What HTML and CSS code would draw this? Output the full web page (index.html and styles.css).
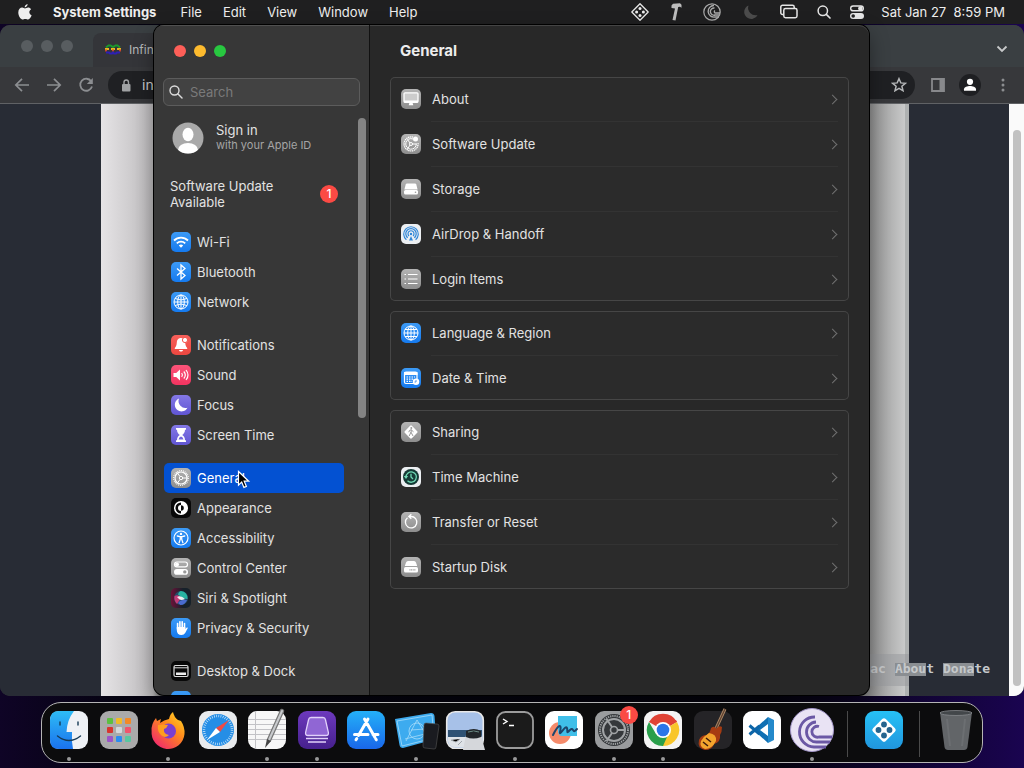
FILE: index.html
```html
<!DOCTYPE html>
<html lang="en">
<head>
<meta charset="utf-8">
<title>System Settings</title>
<link rel="stylesheet" href="styles.css">
</head>
<body>
<!-- menu bar -->
<header class="menubar">
	<nav class="menus">
		<button class="apple" aria-label="Apple"><svg width="14" height="16" viewBox="0 0 14 16"><path fill="#eee" d="M9.6 0C9.7 1.8 8.3 3.4 6.7 3.4 6.500 1.700 8 .2 9.600 0zM7 4.400c.8 0 1.700-.8 3.100-.8 1.200 0 2.300.6 3 1.600-2.600 1.500-2.200 5 .5 6-.6 1.700-2 4.300-3.500 4.300-1 0-1.500-.6-2.800-.6s-1.900.6-2.800.6C2.700 15.500.3 11.800.3 8.500c0-3.200 2-4.900 3.900-4.900 1.200 0 2.100.8 2.800.8z"/></svg></button>
		<button class="appname">System Settings</button>
		<button>File</button>
		<button>Edit</button>
		<button>View</button>
		<button>Window</button>
		<button>Help</button>
	</nav>
	<div class="status">
		<svg width="18" height="18" viewBox="0 0 18 18"><path fill="none" stroke="#e8e8e8" stroke-width="1.300" stroke-linejoin="round" d="M9 .8 17.200 9 9 17.200.8 9z"/><g fill="#eee"><circle cx="9" cy="5.600" r="1.500"/><circle cx="5.600" cy="9" r="1.500"/><circle cx="12.400" cy="9" r="1.500"/><circle cx="9" cy="12.400" r="1.500"/></g></svg>
		<svg width="18" height="18" viewBox="0 0 18 18"><path fill="#bdbdbd" d="M4.500 2.500 6 .8l7-.5 1.500 1.500v3l-1.500-1-1.800.3L8.500 17.500l-3-.5L8 5.500 4.500 5z"/></svg>
		<svg width="18" height="18" viewBox="0 0 18 18"><circle cx="9" cy="9" r="8.200" fill="none" stroke="#aaa" stroke-width="1.200"/><g fill="none" stroke="#aaa" stroke-width="1.400"><path d="M11 2.500a5.800 5.800 0 1 0 1 11.500h4"/><path d="M11.500 5a3.600 3.600 0 1 0 .5 7h4.500"/><path d="M12 7.500a1.500 1.500 0 0 0 0 2.500h5"/></g></svg>
		<svg width="22" height="18" viewBox="0 0 22 18"><path fill="#4c4c4c" d="M9.500 2.500a7 7 0 1 0 9 9.500A7.500 7.500 0 0 1 9.500 2.500z"/></svg>
		<svg width="20" height="18" viewBox="0 0 20 18"><g fill="none" stroke="#e6e6e6" stroke-width="1.500"><path d="M4.500 11.500h-1A1.700 1.700 0 0 1 1.800 9.800V4a1.700 1.700 0 0 1 1.700-1.700h10A1.700 1.700 0 0 1 15.200 4v1.500"/><rect x="4.800" y="5.500" width="13.200" height="9.200" rx="1.700"/></g></svg>
		<svg width="14" height="18" viewBox="0 0 14 18"><circle cx="5.800" cy="7.800" r="4.700" fill="none" stroke="#e6e6e6" stroke-width="1.500"/><path stroke="#e6e6e6" stroke-width="1.700" stroke-linecap="round" d="m9.300 11.300 3.700 3.700"/></svg>
		<svg width="16" height="18" viewBox="0 0 16 18"><rect x="1.700" y="3" width="12.600" height="4.800" rx="2.400" fill="none" stroke="#e6e6e6" stroke-width="1.400"/><circle cx="11.300" cy="5.400" r="2.200" fill="#e6e6e6"/><rect x="1" y="10" width="14" height="6" rx="3" fill="#e6e6e6"/><circle cx="4.200" cy="13" r="1.800" fill="#222"/></svg>
		<span class="clock">Sat Jan 27&nbsp; 8:59 PM</span>
	</div>
</header>

<main class="desktop">
	<!-- browser window, behind -->
	<section class="browser">
		<div class="tabstrip">
			<span class="light"></span><span class="light"></span><span class="light"></span>
			<div class="tab">
				<svg width="16" height="12" viewBox="0 0 16 12"><g fill="none" stroke-width="2"><path stroke="#1c9a2c" d="M1 3.500 3.500 1.500h2L8 3l2.500-1.500h2L15 3.500"/><path stroke="#e8b820" d="M0 5h4M6 5h4M12 5h4"/><path stroke="#c8452c" d="M0 6.500h2M7 6.500h2M14 6.500h2"/><path stroke="#2d1fb4" d="M1 8.500h3l1 1h2l1-1 1 1h2l1-1h3"/></g></svg>
				<span>Infin</span>
			</div>
			<svg class="chev" width="12" height="8" viewBox="0 0 12 8"><path fill="none" stroke="#c8cacb" stroke-width="1.800" d="m1.500 1.500 4.500 4.500 4.500-4.500"/></svg>
		</div>
		<div class="toolbar">
			<button aria-label="Back"><svg width="16" height="16" viewBox="0 0 16 16"><path fill="none" stroke="#8c8e91" stroke-width="1.700" d="M15 8H2M8 1.800 1.800 8 8 14.200"/></svg></button>
			<button aria-label="Forward"><svg width="16" height="16" viewBox="0 0 16 16"><path fill="none" stroke="#8c8e91" stroke-width="1.700" d="M1 8h13M8 1.800 14.200 8 8 14.200"/></svg></button>
			<button aria-label="Reload"><svg width="16" height="16" viewBox="0 0 16 16"><path fill="none" stroke="#8c8e91" stroke-width="1.800" d="M13.200 4.300A6 6 0 1 0 14 9.500"/><path fill="#8c8e91" d="M14.800 1v6H8.800z"/></svg></button>
			<div class="omnibox">
				<svg width="10" height="13" viewBox="0 0 10 13"><rect x="1" y="5" width="8.500" height="7.500" rx="1" fill="#a0a2a4"/><path fill="none" stroke="#a0a2a4" stroke-width="1.400" d="M3 5.500V3.300a2.200 2.200 0 0 1 4.500 0v2.200"/></svg>
				<span>in</span>
				<svg class="star" width="16" height="16" viewBox="0 0 16 16"><path fill="none" stroke="#b4b6b8" stroke-width="1.500" d="m8 1.700 1.800 4.200 4.600.4-3.500 3 1.100 4.500L8 11.400l-4 2.400 1.100-4.500-3.500-3 4.600-.4z"/></svg>
			</div>
			<svg width="14" height="14" viewBox="0 0 14 14"><path fill="none" stroke="#88898c" stroke-width="1.800" d="M1 1h12v12H1z"/><path fill="#88898c" d="M8.500 1H13v12H8.500z"/></svg>
			<svg class="profile" width="22" height="22" viewBox="0 0 22 22"><circle cx="11" cy="11" r="11" fill="#1e1f22"/><circle cx="11" cy="7.800" r="3.100" fill="#fff"/><path fill="#fff" d="M5 16.800v-1.600c0-2 3.500-3.200 6-3.200s6 1.200 6 3.200v1.600z"/></svg>
			<svg width="4" height="14" viewBox="0 0 4 14"><g fill="#8c8e91"><circle cx="2" cy="2" r="1.500"/><circle cx="2" cy="7" r="1.500"/><circle cx="2" cy="12" r="1.500"/></g></svg>
		</div>
		<div class="page">
			<div class="paper"></div>
			<div class="pagefoot">
				<span class="faded">ac</span>
				<a href="#">About</a>
				<a href="#">Donate</a>
			</div>
			<div class="pagescroll"></div>
		</div>
	</section>

	<!-- settings window -->
	<section class="settings">
		<aside class="sidebar">
			<div class="lights"><button class="red" aria-label="Close"></button><button class="yellow" aria-label="Minimize"></button><button class="green" aria-label="Zoom"></button></div>
			<div class="search">
				<svg width="14" height="14" viewBox="0 0 14 14"><circle cx="5.500" cy="5.500" r="4.500" fill="none" stroke="#dcdcdc" stroke-width="1.400"/><path stroke="#dcdcdc" stroke-width="1.500" stroke-linecap="round" d="m9 9 4 4"/></svg>
				<input type="text" placeholder="Search" aria-label="Search">
			</div>
			<div class="scroller">
				<a href="#" class="account">
					<svg width="32" height="32" viewBox="0 0 32 32"><clipPath id="av"><circle cx="16" cy="16" r="15.500"/></clipPath><circle cx="16" cy="16" r="15.500" fill="#a9a9a9"/><g clip-path="url(#av)" fill="#fff"><ellipse cx="16" cy="12.500" rx="5.500" ry="6.800"/><ellipse cx="16" cy="28" rx="10" ry="7"/></g></svg>
					<span><b>Sign in</b><small>with your Apple ID</small></span>
				</a>
				<a href="#" class="update"><span>Software Update Available</span><i class="badge">1</i></a>
				<ul>
					<li><a href="#"><svg class="tile blue" viewBox="0 0 20 20"><g fill="none" stroke="#fff" stroke-width="1.800"><path d="M3 8.500a10 10 0 0 1 14 0M5.800 11.300a6 6 0 0 1 8.400 0"/></g><path fill="#fff" d="M10 15.800 7.800 13.500a3.200 3.200 0 0 1 4.400 0z"/></svg>Wi-Fi</a></li>
					<li><a href="#"><svg class="tile blue" viewBox="0 0 20 20"><path fill="none" stroke="#fff" stroke-width="1.300" d="m6 6.500 8 7-4 3.500V3l4 3.500-8 7"/></svg>Bluetooth</a></li>
					<li><a href="#"><svg class="tile blue" viewBox="0 0 20 20"><g fill="none" stroke="#fff" stroke-width="1"><circle cx="10" cy="10" r="7"/><ellipse cx="10" cy="10" rx="3.300" ry="7"/><path d="M3 10h14M10 3v14M4 6.500q6 3 12 0M4 13.500q6-3 12 0"/></g></svg>Network</a></li>
				</ul>
				<ul>
					<li><a href="#"><svg class="tile red" viewBox="0 0 20 20"><path fill="#fff" d="M10 3c-3 0-4 2.200-4.200 4.500-.2 3-.8 4-2 5.500v1h12.400v-1c-1.200-1.500-1.800-2.500-2-5.500C14 5 13 3 10 3zM8 15h4c-.3 2-3.700 2-4 0z"/><circle cx="14" cy="5" r="2.600" fill="#fff" stroke="#f4554d"/></svg>Notifications</a></li>
					<li><a href="#"><svg class="tile pink" viewBox="0 0 20 20"><path fill="#fff" d="M2.500 8h2.700L9 4.500v11L5.200 12H2.500z"/><g fill="none" stroke="#fff" stroke-width="1.200"><path d="M10.700 8q1.500 2 0 4M12.800 6.500q3 3.500 0 7M15 5q4 5 0 10"/></g></svg>Sound</a></li>
					<li><a href="#"><svg class="tile purple" viewBox="0 0 20 20"><path fill="#fff" d="M8 3.500a6.700 6.700 0 1 0 8.500 9.200A7 7 0 0 1 8 3.500z"/></svg>Focus</a></li>
					<li><a href="#"><svg class="tile purple" viewBox="0 0 20 20"><path fill="#fff" d="M5 3h10v1.800h-1c0 3-1.500 4.200-2.800 5.200 1.300 1 2.800 2.200 2.800 5.200h1V17H5v-1.800h1c0-3 1.500-4.200 2.800-5.200C7.500 9 6 7.800 6 4.800H5z"/><path fill="#7367dd" d="M7.500 14.500Q8 12 10 11.500q2 .5 2.500 3z"/></svg>Screen Time</a></li>
				</ul>
				<ul>
					<li><a href="#" class="on"><svg class="tile gray" viewBox="0 0 20 20"><g fill="none" stroke="#fff"><circle cx="10" cy="10" r="7.300" stroke-width="1.200" stroke-dasharray="1 .9"/><circle cx="10" cy="10" r="6" stroke-width="1.200"/><circle cx="10" cy="10" r="1.700"/><path d="m9 8.500-3-4M9 11.500l-3 4M11.700 10h5"/></g></svg>General</a></li>
					<li><a href="#"><svg class="tile black" viewBox="0 0 20 20"><circle cx="10" cy="10" r="6.300" fill="none" stroke="#fff" stroke-width="1.500"/><path fill="#fff" d="M10 3.700a6.300 6.300 0 0 1 0 12.600v-3.500a2.800 2.800 0 0 0 0-5.600z"/><path fill="#fff" d="M10 7a3 3 0 0 0 0 6z"/></svg>Appearance</a></li>
					<li><a href="#"><svg class="tile blue" viewBox="0 0 20 20"><circle cx="10" cy="10" r="7" fill="none" stroke="#fff" stroke-width="1.200"/><circle cx="10" cy="5.900" r="1.200" fill="#fff"/><path fill="none" stroke="#fff" stroke-width="1.300" stroke-linecap="round" d="m6.300 8 2.700.6h2l2.700-.6M9.300 8.600v2.600l-1.200 3.600M10.700 8.600v2.600l1.200 3.600"/></svg>Accessibility</a></li>
					<li><a href="#"><svg class="tile gray" viewBox="0 0 20 20"><rect x="3.500" y="4" width="13" height="4.800" rx="2.400" fill="none" stroke="#fff" stroke-width="1.200"/><circle cx="6" cy="6.400" r="2" fill="#fff"/><rect x="3" y="11" width="14" height="5.800" rx="2.900" fill="#fff"/><circle cx="13.800" cy="13.900" r="1.700" fill="#999"/></svg>Control Center</a></li>
					<li><a href="#"><svg class="tile siri" viewBox="0 0 20 20"><circle cx="10" cy="10" r="7" fill="#254b66"/><path fill="#27b3a1" d="M10 3a7 7 0 0 1 6.500 8Q12 11 7 6.500 8 3 10 3z"/><path fill="#c43c78" d="M3.500 8Q8 6 10 10l-4 6Q2.500 12.500 3.500 8z"/><path fill="#4a6bd0" d="M7 15q3-4 9-3-2 5-6.500 5z"/><path fill="#fff" opacity=".9" d="M6 9q4-2 8 2-4 2-6 0z"/></svg>Siri &amp; Spotlight</a></li>
					<li><a href="#"><svg class="tile blue" viewBox="0 0 20 20"><g stroke="#fff" stroke-width="1.600" stroke-linecap="round"><path d="M6.600 11V5.500M8.900 10V3.800M11.200 10V3.800M13.500 11V5.500"/></g><path fill="#fff" d="M5.800 9h8.500v2l1.500-1.500q1.200-.3 1 .6l-2.600 5q-1.200 2-3.700 2-4.700 0-4.700-5z"/></svg>Privacy &amp; Security</a></li>
				</ul>
				<ul>
					<li><a href="#"><svg class="tile black" viewBox="0 0 20 20"><rect x="3" y="4.500" width="14" height="11" rx="1.500" fill="none" stroke="#ddd" stroke-width="1.200"/><path stroke="#ddd" d="M3 6.800h14"/><path fill="#eee" d="M5 11.500h10V14H5z"/></svg>Desktop &amp; Dock</a></li>
					<li><a href="#" aria-label="Displays"><svg class="tile blue" viewBox="0 0 20 20"><circle cx="10" cy="10" r="6" fill="#fff"/></svg></a></li>
				</ul>
			</div>
			<div class="thumb"></div>
		</aside>

		<div class="content">
			<h1>General</h1>
			<ul class="card">
				<li><button><svg class="tile gray" viewBox="0 0 20 20"><rect x="3" y="3.800" width="14" height="9.500" rx="1" fill="#ccc" stroke="#fff" stroke-width="1.300"/><path fill="#fff" d="M3 11.500h14v2H3zM8.500 13.500h3l.8 2.800H7.700z"/></svg>About</button></li>
				<li><button><svg class="tile gray" viewBox="0 0 20 20"><g fill="none" stroke="#fff"><path stroke-width="1.300" stroke-dasharray="1.300 .6" d="M12 3.200A7 7 0 1 0 17 9"/><path d="M12 5A5.300 5.300 0 1 0 15.300 9.500M9 9 6.500 5.500M9 11l-2.500 4M11 10h4.500"/><circle cx="10" cy="10" r="1.500"/></g><circle cx="14.500" cy="5" r="2.500" fill="#fff"/></svg>Software Update</button></li>
				<li><button><svg class="tile gray" viewBox="0 0 20 20"><path fill="#fff" d="M6 4.500h8q1 0 1.300 1l1.300 5H3.400l1.300-5q.3-1 1.300-1z"/><rect x="3" y="11" width="14" height="4.500" rx="1.500" fill="#fff"/><circle cx="14.500" cy="13.200" r=".8" fill="#999"/></svg>Storage</button></li>
				<li><button><svg class="tile white" viewBox="0 0 20 20"><g fill="none" stroke="#3187d8" stroke-width="1.200"><path d="M5.400 15.700a7.300 7.300 0 1 1 9.200 0M6.700 13.800a5.200 5.200 0 1 1 6.600 0M8 12a3 3 0 1 1 4 0"/></g><circle cx="10" cy="10" r="1.200" fill="#3187d8"/><path fill="#3187d8" d="m10 12 2 4.500H8z"/></svg>AirDrop &amp; Handoff</button></li>
				<li><button><svg class="tile gray" viewBox="0 0 20 20"><g stroke="#fff" stroke-width="1.200"><path d="M3.500 5.500H5M7 5.500h9.500M3.500 10H5M7 10h9.500M3.500 14.500H5M7 14.500h9.500"/></g></svg>Login Items</button></li>
			</ul>
			<ul class="card">
				<li><button><svg class="tile blue" viewBox="0 0 20 20"><g fill="none" stroke="#fff" stroke-width="1"><circle cx="10" cy="10" r="7"/><ellipse cx="10" cy="10" rx="3.300" ry="7"/><path d="M3 10h14M10 3v14M4 6.500h12M4 13.500h12"/></g></svg>Language &amp; Region</button></li>
				<li><button><svg class="tile blue" viewBox="0 0 20 20"><rect x="3.500" y="4" width="12.500" height="11.500" rx="1.500" fill="none" stroke="#fff" stroke-width="1.200"/><path fill="#fff" d="M3 4h13.500v3H3z"/><path stroke="#fff" stroke-width="1.200" stroke-dasharray="1.500 1" d="M5.500 9h8.500M5.500 11.200H12M5.500 13.400H11"/><circle cx="15" cy="13.800" r="3.300" fill="#fff"/><path fill="none" stroke="#2782ee" stroke-width=".8" d="M15 12v2h-1.500"/></svg>Date &amp; Time</button></li>
			</ul>
			<ul class="card">
				<li><button><svg class="tile gray" viewBox="0 0 20 20"><rect x="5" y="5" width="10" height="10" rx="1.200" fill="#fff" transform="rotate(45 10 10)"/><circle cx="10.300" cy="6" r="1" fill="#999"/><path fill="none" stroke="#999" d="M10.200 7.500v3l1.800 3.500M10 10l-1.800 4M7.800 10.200 8.500 8.400l1.700-.6 2.300 2"/></svg>Sharing</button></li>
				<li><button><svg class="tile white" viewBox="0 0 20 20"><circle cx="10" cy="10" r="8" fill="#153a35"/><path fill="none" stroke="#6fd8b4" stroke-width="1.300" d="M5 10a5.200 5.200 0 1 1 1.500 3.700M10 6.800V10l2 2"/><path fill="#6fd8b4" d="M2.800 9h4.400L5 12z"/></svg>Time Machine</button></li>
				<li><button><svg class="tile gray" viewBox="0 0 20 20"><path fill="none" stroke="#fff" stroke-width="1.300" d="M6.500 5.800A5.700 5.700 0 1 0 10 4.500H8M10.300 2.200 7.800 4.500l2.500 2.300"/></svg>Transfer or Reset</button></li>
				<li><button><svg class="tile gray" viewBox="0 0 20 20"><path fill="#fff" d="M7 4h6q1.500 0 2 1.500L16.200 9H3.800L5 5.500Q5.500 4 7 4z"/><rect x="3" y="10" width="14" height="5.500" rx="1.500" fill="#fff"/><path stroke="#999" stroke-width="1.300" stroke-dasharray="1 .6" d="M8.500 12.800H15"/></svg>Startup Disk</button></li>
			</ul>
		</div>
	</section>
	<svg class="cursor" width="14" height="20" viewBox="0 0 14 20"><path fill="#000" stroke="#fff" stroke-width="1.200" d="M1.500 1.500v13.600l3.200-3 2.200 5.300 2.500-1-2.200-5.200h4.500z"/></svg>
</main>

<!-- dock -->
<footer class="dock">
	<button class="app run" aria-label="Finder"><svg viewBox="0 0 38 38"><defs><linearGradient id="fb" x1="0" y1="0" x2="0" y2="1"><stop offset="0" stop-color="#2ebcf5"/><stop offset="1" stop-color="#1a72ee"/></linearGradient></defs><rect width="38" height="38" rx="9" fill="#eef1f5"/><path fill="url(#fb)" d="M9 0h15q-7 9-7.500 21H22q-.6 9 1 17H9q-9 0-9-9V9q0-9 9-9z"/><g fill="none" stroke="#163a55" stroke-width="1.400" stroke-linecap="round"><path d="M10 11v3M28 11v3M7.500 25q11.500 9 23 0"/></g></svg></button>
	<button class="app" aria-label="Launchpad"><svg viewBox="0 0 38 38"><rect width="38" height="38" rx="9" fill="#aaa"/><rect x="7" y="7" width="6" height="6" rx="1" fill="#5cc040"/><rect x="16" y="7" width="6" height="6" rx="1" fill="#f0bb28"/><rect x="25" y="7" width="6" height="6" rx="1" fill="#f38a27"/><rect x="7" y="16" width="6" height="6" rx="1" fill="#d8352e"/><rect x="16" y="16" width="6" height="6" rx="1" fill="#d4d8da"/><rect x="25" y="16" width="6" height="6" rx="1" fill="#f1546c"/><rect x="7" y="25" width="6" height="6" rx="1" fill="#9c55c8"/><rect x="16" y="25" width="6" height="6" rx="1" fill="#2b8df0"/><rect x="25" y="25" width="6" height="6" rx="1" fill="#58c7a0"/></svg></button>
	<button class="app run" aria-label="Firefox"><svg viewBox="0 0 38 38"><defs><linearGradient id="ff" x1="1" y1="0" x2=".2" y2="1"><stop offset="0" stop-color="#ffe226"/><stop offset=".45" stop-color="#ff8a1c"/><stop offset="1" stop-color="#f0266f"/></linearGradient></defs><path fill="url(#ff)" d="M20 8q1-5 4-7 1 5 5 8l3 1q4 6 3.500 13A16.500 16.500 0 0 1 2.600 20Q2 13 7 7l1 3 4-2-1 4q4-3 9-4z"/><circle cx="19.500" cy="20" r="7.500" fill="#7a3fd0"/><path fill="#ff9d1e" d="M9 14q6-1 10 0-1 3-4 4-1 5 5 6-4 4-8 0-4-4-3-10z"/></svg></button>
	<button class="app" aria-label="Safari"><svg viewBox="0 0 38 38"><rect width="38" height="38" rx="9" fill="#e9ebed"/><circle cx="19" cy="19" r="16" fill="#258ee6"/><circle cx="19" cy="19" r="14" fill="none" stroke="#d6ecfc" stroke-width="2.500" stroke-dasharray=".7 1.500"/><path fill="#ef4a43" d="m30 9-9 12-4-4z"/><path fill="#fff" d="m8 29 9-12 4 4z"/></svg></button>
	<button class="app run" aria-label="TextEdit"><svg viewBox="0 0 38 38"><rect width="38" height="38" rx="9" fill="#f7f7f7"/><path stroke="#c2c2c6" d="M0 8.500h38M0 13.500h38M0 18.500h38M0 23.500h38M0 28.500h38M7.500 0v38"/><path stroke="#777" stroke-width="4.500" stroke-linecap="round" d="M34 0 21 29"/><path stroke="#c9cbce" stroke-width="2" stroke-linecap="round" d="M34 0 21 29"/><path fill="#444" d="m19 28-2 9 6-7z"/></svg></button>
	<button class="app run" aria-label="Drive"><svg viewBox="0 0 38 38"><defs><linearGradient id="pu" x1="0" y1="0" x2="0" y2="1"><stop offset="0" stop-color="#6d39bd"/><stop offset="1" stop-color="#46208d"/></linearGradient></defs><rect width="38" height="38" rx="9" fill="url(#pu)"/><path fill="#9066d4" stroke="#e1d1fa" stroke-width="1.300" d="M13 6.500h12q2 0 2.400 2l3 13q.4 3-2.400 3H10q-2.800 0-2.400-3l3-13q.4-2 2.400-2z"/><path stroke="#e1d1fa" stroke-width="1.300" d="M8 27.500h22M10 31h18"/></svg></button>
	<button class="app" aria-label="App Store"><svg viewBox="0 0 38 38"><defs><linearGradient id="as" x1="0" y1="0" x2="0" y2="1"><stop offset="0" stop-color="#24b0f8"/><stop offset="1" stop-color="#1967ea"/></linearGradient></defs><rect width="38" height="38" rx="9" fill="url(#as)"/><g stroke="#fff" stroke-width="3" stroke-linecap="round"><path d="m21 8-9.500 16.500M17.500 8 28 26.500M7.500 23.500H21M26 23.500h5M9.800 27.500l-.8 1.300M28.800 28l.5.800"/></g></svg></button>
	<button class="app run" aria-label="Simulator"><svg viewBox="0 0 38 38"><path fill="#3dabef" d="M-2 8 34 2q3 0 3.500 3L39 28 6 37q-3 0-3.500-3z"/><g fill="none" stroke="#a6dcfa" stroke-width=".8"><path d="m0 10 35-6 2 23L5 35zM9 30 20 9l11 18M8 28l24-6M14 19l14-1"/><circle cx="20" cy="20" r="8"/></g><path fill="#1a1b20" stroke="#555" stroke-width=".6" d="m29 12 11 1q2 0 2 2l-3 21q0 2-2 2l-9-1q-2 0-2-2l1-21q0-2 2-2z"/></svg></button>
	<button class="app" aria-label="Preview"><svg viewBox="0 0 38 38"><rect x=".7" y=".7" width="36.600" height="36.600" rx="8.500" fill="#a7c1e8" stroke="#e8e8e8" stroke-width="1.600"/><path fill="#2f5274" d="M2 19h34v7H2z"/><path fill="#dfe3e8" d="M2 26h34v4q-1 6-7 6H9q-6 0-7-6z"/><path stroke="#a1a6ac" d="m5 29 5 2 4-3M12 34l4-4"/><path fill="#d5d7db" d="M20 24h15l4 15H17z"/><path fill="#22262a" d="M20 20q8-4 15 0v6q-8 3-15 0z"/><path stroke="#6e8d88" d="M22 21q6-2 11 0"/></svg></button>
	<button class="app run" aria-label="Terminal"><svg viewBox="0 0 38 38"><rect x="1" y="1" width="36" height="36" rx="8.500" fill="#1b1b1b" stroke="#9c9c9c" stroke-width="1.800"/><path fill="none" stroke="#fff" stroke-width="1.400" d="m7 8 4 2.500L7 13M13 14.500h5"/></svg></button>
	<button class="app" aria-label="Freeform"><svg viewBox="0 0 38 38"><rect width="38" height="38" rx="9" fill="#fff"/><circle cx="15" cy="22" r="11" fill="#f58b6b"/><path fill="#40bfe9" d="M13 5h19v20H17q-4 0-4-6z"/><path fill="none" stroke="#1d456b" stroke-width="2" stroke-linecap="round" d="M8 24c6-12 9-11 7-3-1 5 6-8 7-4s-1 6 3 2 2 5 7-1"/></svg></button>
	<button class="app run" aria-label="System Settings"><svg viewBox="0 0 38 38"><rect width="38" height="38" rx="9" fill="#9a9c9e"/><circle cx="19" cy="19" r="16" fill="#35383b"/><g fill="none" stroke="#a1a4a6"><circle cx="19" cy="19" r="14" stroke-width="2" stroke-dasharray="1.200 1"/><circle cx="19" cy="19" r="11" stroke-width="2"/><circle cx="19" cy="19" r="3.500" stroke-width="1.600"/><path stroke-width="2" d="m17 16-5.500-8M17 22l-5.500 8M22.500 19H30"/></g></svg><i class="badge">1</i></button>
	<button class="app run" aria-label="Chrome"><svg viewBox="0 0 38 38"><rect width="38" height="38" rx="9" fill="#f4f4f4"/><path fill="#e04335" d="M19 19 5 11a16 16 0 0 1 28 0z"/><path fill="#f8c62b" d="M19 19l14-8a16 16 0 0 1-14 24z"/><path fill="#2a9f4b" d="M19 35A16 16 0 0 1 5 11l7 12 11 3z"/><path fill="#e04335" d="M5 11h28l-1-2H8z"/><circle cx="19" cy="19" r="8" fill="#fff"/><circle cx="19" cy="19" r="6.300" fill="#2b75e8"/></svg></button>
	<button class="app" aria-label="GarageBand"><svg viewBox="0 0 38 38"><rect width="38" height="38" rx="9" fill="#252427"/><path stroke="#b08a67" stroke-width="3" d="M31-2 19 24"/><path stroke="#5c4030" stroke-width="1.300" d="M31-2 19 24"/><path fill="#a63b12" d="M17 17q4-3 5 1 3-4 6-2 0 5-2 8 1 7-6 9-2 6-9 6-8-2-6-10 2-5 8-5 3-2 4-7z"/><path fill="#f3a42d" d="M15 22q8 1 7 8-4 8-11 8-6-2-4-8 3-5 8-8z"/><path stroke="#3b1a0e" stroke-width="1.500" d="m12 27 5 4M9 31l5 4"/></svg></button>
	<button class="app" aria-label="Visual Studio Code"><svg viewBox="0 0 38 38"><rect width="38" height="38" rx="9" fill="#fff"/><path fill="#2489ca" d="m25 6 6 3v20l-6 3z"/><path fill="#1070b3" d="m25 6-14.500 13L25 32V25l-8-6 8-6z"/><path fill="none" stroke="#0d65a8" stroke-width="3" d="m6.500 14.500 10 8.500M6.500 23.500l10-8.500"/></svg></button>
	<button class="app run" aria-label="BitTorrent"><svg viewBox="0 0 38 38"><circle cx="19" cy="19" r="21.500" fill="#e9e3f4" stroke="#a497ca"/><g fill="none" stroke="#6b58a5" stroke-width="2.800"><path d="M22 6A14.500 14.500 0 1 0 21 36h12"/><path d="M23 11a10 10 0 1 0 1 20h13"/><path d="M26 15.500a5.500 5.500 0 1 0 0 10.500h13"/></g></svg></button>
	<span class="sep"></span>
	<button class="app" aria-label="Tiles"><svg viewBox="0 0 38 38"><defs><linearGradient id="ti" x1="0" y1="0" x2="0" y2="1"><stop offset="0" stop-color="#26c1f5"/><stop offset="1" stop-color="#2196de"/></linearGradient></defs><rect width="38" height="38" rx="9" fill="url(#ti)"/><rect x="10" y="10" width="18" height="18" rx="2.500" fill="#fff" transform="rotate(45 19 19)"/><g fill="#25648e"><circle cx="19" cy="13.500" r="2.900"/><circle cx="13.500" cy="19" r="2.900"/><circle cx="24.500" cy="19" r="2.900"/><circle cx="19" cy="24.500" r="2.900"/></g></svg></button>
	<span class="sep"></span>
	<button class="app" aria-label="Trash"><svg viewBox="0 0 38 38"><path fill="#626568" d="M3 1h32l-4.500 35q-.5 3-3.500 3H11q-3 0-3.500-3z"/><ellipse cx="19" cy="2" rx="16" ry="2.500" fill="#43474a" stroke="#85888b" stroke-width=".8"/><path stroke="#6c6f72" stroke-width="2" d="m10 8 3 27M28 8l-3 27"/></svg></button>
</footer>
</body>
</html>
```
FILE: styles.css
```css
*{
	box-sizing:border-box;
}
body{
	margin:0;
	height:100vh;
	display:flex;
	flex-direction:column;
	overflow:hidden;
	position:relative;
	font-family:Inter, "Liberation Sans", sans-serif;
	font-size:13px;
	line-height:16px;
	color:#e2e2e2;
	background:linear-gradient(90deg, #0f0426 0%, #050310 12%, #04030c 75%, #1a0450 100%);
}
button{
	border:0;
	padding:0;
	margin:0;
	background:none;
	color:inherit;
	font:inherit;
	text-align:left;
}
a{
	color:inherit;
	text-decoration:none;
}
ul{
	list-style:none;
	margin:0;
	padding:0;
}
svg{
	display:block;
	flex:none;
	overflow:visible;
}

/* menu bar */
.menubar{
	height:24px;
	flex:none;
	display:flex;
	justify-content:space-between;
	align-items:center;
	padding:0 19px 0 18px;
	background:#1f1f20;
	color:#eee;
}
.menus, .status{
	display:flex;
	align-items:center;
	gap:21px;
}
.status{
	gap:18px;
}
.appname{
	margin-right:3px;
	font-weight:700;
}
.clock{
	margin-left:-2px;
}

/* desktop and windows */
.desktop{
	flex:1;
	position:relative;
	margin-bottom:72px;
}
.browser{
	position:absolute;
	top:1px;
	left:0;
	right:0;
	bottom:0;
	display:flex;
	flex-direction:column;
	border-radius:10px;
	overflow:hidden;
	background:#36373a;
}
.tabstrip{
	height:42px;
	flex:none;
	display:flex;
	align-items:center;
	gap:8px;
	padding:0 16px 0 21px;
	background:#3a3f42;
}
.light{
	width:12px;
	height:12px;
	border-radius:50%;
	background:#585d60;
}
.tab{
	align-self:flex-end;
	height:34px;
	width:240px;
	margin-left:12px;
	padding-left:12px;
	display:flex;
	align-items:center;
	gap:8px;
	font-size:12px;
	border-radius:8px 8px 0 0;
	background:#343539;
	color:#b6b8ba;
}
.chev{
	margin:6px 0 0 auto;
}
.toolbar{
	height:37px;
	flex:none;
	display:flex;
	align-items:center;
	gap:16px;
	padding:0 19px 0 14px;
	border-bottom:1px solid #606265;
	background:#37383b;
}
.omnibox{
	flex:1;
	height:28px;
	margin-left:-2px;
	padding:0 8px 0 13px;
	border-radius:14px;
	display:flex;
	align-items:center;
	gap:11px;
	font-size:14px;
	background:#1f2023;
	color:#ccc;
}
.star{
	margin-left:auto;
}
.profile{
	margin:0 4px 0 -2px;
}
.page{
	flex:1;
	display:flex;
	position:relative;
	padding-left:101px;
	background:#282c35;
}
.paper{
	flex:1;
	margin-right:100px;
	border-right:4px solid #aeb1b1;
	background:linear-gradient(90deg, #e6e4e6 0, #bcbabc 52px, #777 60px, #8a8a8a 765px, #c9caca 100%);
}
.pagescroll{
	width:15px;
	padding:26px 3px 10px 4px;
	background:#fafafa;
}
.pagescroll::before{
	content:"";
	display:block;
	height:100%;
	border-radius:4px;
	background:#c1c1c1;
}
.pagefoot{
	position:absolute;
	right:34px;
	bottom:18px;
	display:flex;
	gap:9px;
	font:bold 13px/18px "DejaVu Sans Mono", monospace;
	color:#c5c8ca;
}
.pagefoot::before{
	content:"";
	position:absolute;
	left:-20px;
	top:-6px;
	bottom:-8px;
	right:81px;
	background:rgba(150,152,155,.5);
}
.pagefoot *{
	position:relative;
}
.pagefoot a{
	background:linear-gradient(#8a8e92, #8a8e92) no-repeat 0 3px / 31px 13px;
}
.faded{
	color:#c4c6c8;
}

.settings{
	position:absolute;
	top:1px;
	left:154px;
	right:155px;
	bottom:1px;
	display:flex;
	overflow:hidden;
	border-radius:10px;
	background:#282828;
	box-shadow:0 0 0 1px #000, inset 0 1px 0 #444, 0 8px 20px rgba(0,0,0,.4);
}
.sidebar{
	width:216px;
	flex:none;
	position:relative;
	display:flex;
	flex-direction:column;
	padding:20px 9px 0;
	background:#373737;
	border-right:1px solid #111;
	box-shadow:inset 0 1px 0 #505050;
}
.lights{
	display:flex;
	gap:8px;
	margin:0 11px 21px;
}
.lights button{
	width:12px;
	height:12px;
	border-radius:50%;
}
.lights .red{
	background:#fe5f58;
}
.lights .yellow{
	background:#febb2e;
}
.lights .green{
	background:#28c840;
}
.search{
	height:28px;
	flex:none;
	display:flex;
	align-items:center;
	gap:7px;
	padding:0 5px;
	border:1px solid #5c5c5c;
	border-radius:6px;
	background:#424242;
}
.search input{
	flex:1;
	min-width:0;
	border:0;
	padding:0;
	outline:0;
	background:none;
	font:inherit;
	color:#ddd;
}
.search input::placeholder{
	color:#7a7a7a;
	opacity:1;
}
.scroller{
	flex:1;
	min-height:0;
	overflow:hidden;
	padding-top:16px;
	width:181px;
}
.account{
	display:flex;
	align-items:center;
	gap:12px;
	height:32px;
	margin:0 0 24px 9px;
}
.account b, .account small{
	display:block;
	white-space:nowrap;
	font-weight:400;
	line-height:15px;
}
.account small{
	font-size:11px;
	color:#a5a5a5;
}
.update{
	display:flex;
	align-items:center;
	justify-content:space-between;
	margin-bottom:17px;
	padding:0 6px 0 7px;
}
.update span{
	width:120px;
}
.badge{
	width:18px;
	height:18px;
	border-radius:50%;
	background:#fb4a44;
	color:#fff;
	font-size:12px;
	font-style:normal;
	font-weight:500;
	line-height:18px;
	text-align:center;
}
.scroller ul{
	margin-bottom:13px;
}
.scroller li a{
	display:flex;
	align-items:center;
	gap:6px;
	height:30px;
	margin-left:1px;
	padding-left:7px;
	border-radius:5px;
}
.scroller li a.on{
	background:#0351d2;
	color:#fff;
}
.thumb{
	position:absolute;
	top:93px;
	right:3px;
	width:8px;
	height:300px;
	border-radius:4px;
	background:#848484;
}

/* icon tiles */
.tile{
	width:20px;
	height:20px;
	border-radius:5px;
}
.blue{
	background:linear-gradient(#3c9af5, #157aef);
}
.red{
	background:linear-gradient(#f8605a, #ec4740);
}
.pink{
	background:linear-gradient(#fb5479, #f23460);
}
.purple{
	background:linear-gradient(#8378e6, #6055d2);
}
.gray{
	background:linear-gradient(#b4b4b4, #8d8d8d);
}
.black{
	background:#080808;
}
.white{
	background:#eceff2;
}
.siri{
	background:linear-gradient(90deg, #6c1138, #16212a 60%);
}

/* right pane */
.content{
	flex:1;
	padding:0 20px;
}
.content h1{
	margin:16px 10px;
	font-size:15px;
	line-height:20px;
	font-weight:700;
	color:#ededed;
}
.card{
	margin-bottom:10px;
	border-radius:5px;
	background:#2b2b2b;
	box-shadow:inset 0 0 0 1px #464646;
}
.card li + li{
	border-top:1px solid #2b2b2b;
	border-image:linear-gradient(90deg, transparent 42px, #333 42px, #333 calc(100% - 12px), transparent calc(100% - 12px)) 1;
}
.card button{
	display:flex;
	align-items:center;
	gap:11px;
	width:100%;
	height:44px;
	padding:0 13px 0 11px;
}
.card button::after{
	content:"";
	width:6px;
	height:6px;
	margin-left:auto;
	border-top:1px solid #707070;
	border-right:1px solid #707070;
	transform:rotate(45deg);
}
.cursor{
	position:absolute;
	left:237px;
	top:446px;
}

/* dock */
.dock{
	position:absolute;
	left:41px;
	right:41px;
	bottom:5px;
	height:61px;
	display:flex;
	justify-content:space-between;
	padding:8px 7px 0 8px;
	border:1px solid #b5b5b5;
	border-radius:20px;
	background:#0c0c0d;
}
.app{
	position:relative;
	width:38px;
	height:38px;
}
.app svg{
	width:38px;
	height:38px;
}
.run::after{
	content:"";
	position:absolute;
	left:17px;
	bottom:-12px;
	width:4px;
	height:4px;
	border-radius:50%;
	background:#999;
}
.app .badge{
	position:absolute;
	right:-5px;
	top:-5px;
}
.sep{
	width:1px;
	height:46px;
	margin:0 5px;
	background:#4a4a4a;
}
```
